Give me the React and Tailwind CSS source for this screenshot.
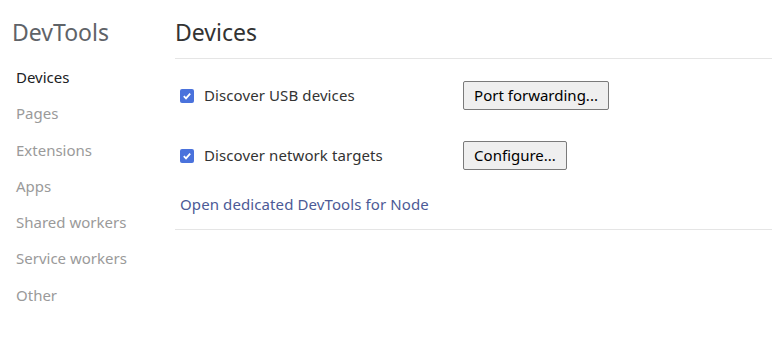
const items = ["Devices", "Pages", "Extensions", "Apps", "Shared workers", "Service workers", "Other"];

function Check() {
  return (
    <span className="flex h-[14px] w-[14px] items-center justify-center rounded-[2px] bg-[#4a72dc]">
      <svg width="10" height="10" viewBox="0 0 10 10">
        <path d="M1.8 5.2 L4 7.4 L8.2 2.6" fill="none" stroke="white" strokeWidth="1.8" />
      </svg>
    </span>
  );
}

function Row({ label, button, btnWidth }) {
  return (
    <div className="flex h-[29px] items-center">
      <div className="flex w-[288px] items-center pl-[5px]">
        <Check />
        <span className="ml-[10px] text-[15px] tracking-[0.1px] text-[#333]">{label}</span>
      </div>
      <button className={`h-[29px] ${btnWidth} rounded-[2px] border border-[#7a7a7a] bg-[#efefef] text-[15px] text-black`}>
        {button}
      </button>
    </div>
  );
}

export default function App() {
  return (
    <div className="flex h-[363px] w-[772px] bg-white font-['Noto_Sans',sans-serif]">
      <div className="w-[175px] shrink-0">
        <h1 className="ml-[12px] mt-[14px] h-[36px] text-[23px] leading-[36px] text-[#5f6368]">DevTools</h1>
        <ul className="mt-[9px]">
          {items.map((it, i) => (
            <li
              key={it}
              className={`ml-[16px] h-[36.3px] text-[15px] leading-[36px] ${i === 0 ? "text-[#202124]" : "text-[#9a9a9a]"}`}
            >
              {it}
            </li>
          ))}
        </ul>
      </div>
      <div className="flex-1">
        <h2 className="mt-[14px] h-[36px] text-[23px] leading-[36px] text-[#333]">Devices</h2>
        <div className="mt-[8px] border-t border-[#e5e5e5]" />
        <div className="mt-[22px]">
          <Row label="Discover USB devices" button="Port forwarding..." btnWidth="w-[146px]" />
        </div>
        <div className="mt-[31px]">
          <Row label="Discover network targets" button="Configure..." btnWidth="w-[104px]" />
        </div>
        <div className="mt-[23px] pl-[5px] text-[15px] leading-[22px] tracking-[0.1px] text-[#4c5a96]">Open dedicated DevTools for Node</div>
        <div className="mt-[14px] border-t border-[#e5e5e5]" />
      </div>
    </div>
  );
}
